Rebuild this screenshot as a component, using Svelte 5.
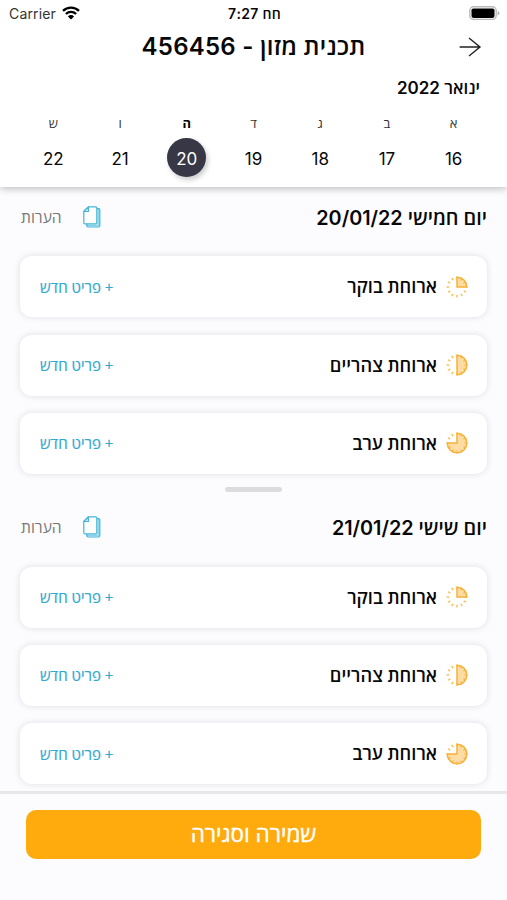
<script>
  const week = [
    { letter: 'א', date: 16 },
    { letter: 'ב', date: 17 },
    { letter: 'ג', date: 18 },
    { letter: 'ד', date: 19 },
    { letter: 'ה', date: 20, active: true },
    { letter: 'ו', date: 21 },
    { letter: 'ש', date: 22 },
  ];
  const meals = [
    { name: 'ארוחת בוקר', quarters: 1 },
    { name: 'ארוחת צהריים', quarters: 2 },
    { name: 'ארוחת ערב', quarters: 3 },
  ];
  const days = [
    { name: 'יום חמישי', date: '20/01/22' },
    { name: 'יום שישי', date: '21/01/22' },
  ];
  const wedges = {
    1: 'M11 1.2V11H20.8A9.8 9.8 0 0 0 11 1.2Z',
    2: 'M11 1.2V20.8A9.8 9.8 0 0 0 11 1.2Z',
    3: 'M11 1.2V11H1.2A9.8 9.8 0 1 0 11 1.2Z',
  };
  const ticks = Array.from({ length: 12 }, (_, i) => i * 30);
</script>

<div class="screen" dir="rtl">
  <header>
    <div class="status" dir="ltr">
      <div class="carrier">
        <span>Carrier</span>
        <svg width="18" height="14" viewBox="0 0 18 14" fill="none" stroke="#000" stroke-width="2.3">
          <path d="M1 4.9A11.3 11.3 0 0 1 17 4.9" />
          <path d="M3.9 8A7.2 7.2 0 0 1 14.1 8" />
          <path d="M9 13.6L5.9 10.4A4.4 4.4 0 0 1 12.1 10.4Z" fill="#000" stroke="none" />
        </svg>
      </div>
      <div class="time">7:27 <bdi>חח</bdi></div>
      <svg class="battery" width="31" height="15" viewBox="0 0 31 15">
        <rect x=".8" y=".8" width="26.4" height="12.6" rx="3.8" fill="#fff" stroke="#b9b9b9" stroke-width="1.4" />
        <rect x="2.5" y="2.5" width="23" height="9.4" rx="1.8" fill="#000" />
        <path d="M28.7 4.9C31 5.8 31 8.5 28.7 9.4Z" fill="#b0b0b0" />
      </svg>
    </div>
    <div class="titlebar">
      <svg class="arrow" width="23" height="20" viewBox="0 0 23 20" fill="none" stroke="#222" stroke-width="1.4">
        <path d="M.6 10H21M10 1L21 10L10 19" />
      </svg>
      <h1><span>תכנית מזון</span> - <b>456456</b></h1>
    </div>
    <div class="month"><span>ינואר</span> <b>2022</b></div>
    <div class="week">
      {#each week as d}
        <div class="day" class:active={d.active}>
          <span class="letter">{d.letter}</span>
          <span class="date">{d.date}</span>
        </div>
      {/each}
    </div>
  </header>

  <main>
    {#each days as day}
      <section>
        <div class="dayhead">
          <h2><span>{day.name}</span> <b>{day.date}</b></h2>
          <div class="notes">
            <svg width="18" height="22" viewBox="0 0 18 22" fill="none" stroke="#45b5d8" stroke-width="1.2" stroke-linejoin="round">
              <path d="M13.8 2.6H15.6Q16.8 2.6 16.8 3.8V19.8Q16.8 21 15.6 21H5Q3.8 21 3.8 19.8V17.9" fill="#d6f0f8" />
              <path d="M15.3 2.6V19.4H3.8" stroke-width=".6" />
              <path d="M5.4 .8H12.6Q13.8 .8 13.8 2V16.7Q13.8 17.9 12.6 17.9H2Q.8 17.9 .8 16.7V5.5Z" fill="#fff" />
              <path d="M5.4 .8V5.5H.8Z" fill="#d6f0f8" />
            </svg>
            <span>הערות</span>
          </div>
        </div>
        {#each meals as meal}
          <div class="card">
            <svg width="22" height="22" viewBox="0 0 22 22" fill="none">
              {#each ticks as a}
                <path d="M11 .5V3.2" stroke="#f9bd50" stroke-width="1.4" transform="rotate({a} 11 11)" />
              {/each}
              <path d={wedges[meal.quarters]} fill="#fddda4" stroke="#f8b13b" stroke-width="1.5" />
              {#each ticks.filter((a) => a > 0 && a < meal.quarters * 90) as a}
                <path d="M11 1.5V3.6" stroke="#f8b13b" stroke-width="1" transform="rotate({a} 11 11)" />
              {/each}
            </svg>
            <span class="meal">{meal.name}</span>
            <span class="add">+ פריט חדש</span>
          </div>
        {/each}
      </section>
      <div class="handle"></div>
    {/each}
  </main>

  <footer>
    <button>שמירה וסגירה</button>
  </footer>
</div>

<style>
  .screen {
    width: 507px;
    height: 900px;
    display: flex;
    flex-direction: column;
    overflow: hidden;
    background: #fcfcfe;
    color: #080808;
    font-family: Inter, "Open Sans", "Liberation Sans", sans-serif;
    white-space: nowrap;
  }
  h1, h2 { margin: 0; }
  header {
    height: 187px;
    flex: none;
    display: flex;
    flex-direction: column;
    background: #fff;
    box-shadow: 0 2px 7px rgba(0, 0, 0, 0.24);
    z-index: 1;
  }
  .status {
    height: 28px;
    padding: 0 7px 0 9px;
    display: grid;
    grid-template-columns: 1fr auto 1fr;
    align-items: center;
    font-size: 14px;
    line-height: 28px;
  }
  .carrier { display: flex; align-items: center; gap: 6px; color: #333; letter-spacing: 0.15px; }
  .carrier svg { margin-top: -3px; }
  .time { font-weight: 600; font-size: 14px; letter-spacing: 0.3px; }
  .battery { justify-self: end; margin-top: -1px; }
  .titlebar {
    height: 36px;
    display: grid;
    grid-template-columns: 1fr auto 1fr;
    align-items: center;
    padding: 0 25px;
  }
  .arrow { justify-self: start; }
  h1 { font-size: 24px; font-weight: 600; line-height: 37px; letter-spacing: 0.25px; }
  h1 b, h2 b, .month b { font-weight: 600; }
  .month {
    padding-right: 27px;
    height: 48px;
    line-height: 48px;
    font-size: 17px;
    font-weight: 600;
  }
  .week { display: flex; padding: 0 20px; }
  .day { flex: 1; display: flex; flex-direction: column; align-items: center; }
  .letter { font-size: 13px; line-height: 22px; color: #333; }
  .date {
    width: 39px;
    height: 39px;
    margin-top: 4px;
    border-radius: 50%;
    line-height: 42px;
    text-align: center;
    font-size: 17px;
  }
  .active .letter { font-weight: 700; color: #000; }
  .active .date { background: #383746; color: #fff; box-shadow: 2px 3px 5px rgba(0, 0, 0, 0.2); }
  main { height: 604px; flex: none; overflow: hidden; }
  .dayhead {
    height: 60px;
    padding: 0 20px 0 21px;
    display: flex;
    justify-content: space-between;
    align-items: center;
  }
  h2 { font-size: 19.8px; font-weight: 600; }
  .notes { display: flex; align-items: center; gap: 21px; font-size: 15.6px; color: #777; }
  section { padding-bottom: 13.5px; }
  .card {
    height: 61px;
    margin: 0 20px 17.3px;
    padding: 0 19px 0 20px;
    box-sizing: border-box;
    display: flex;
    align-items: center;
    background: #fff;
    border-radius: 12px;
    box-shadow: 0 0 7px rgba(0, 0, 0, 0.12);
  }
  .dayhead + .card { margin-top: 9.3px; }
  .card:last-child { margin-bottom: 0; }
  .meal { margin-right: 9px; font-size: 18.2px; line-height: 24px; padding-bottom: 1px; font-weight: 600; }
  .add {
    margin-right: auto;
    font: 500 15px "Open Sans", "Liberation Sans", sans-serif;
    color: #32a9cf;
    -webkit-text-stroke: 0.2px #32a9cf;
  }
  .handle { width: 57px; height: 5px; margin: 0 auto 5px; border-radius: 3px; background: #dcdcdd; }
  footer { flex: 1; border-top: 3px solid #e7e7ea; padding: 16px 26px 0; }
  button {
    width: 100%;
    height: 49px;
    padding: 0 0 2px;
    border: 0;
    border-radius: 10px;
    background: #ffaa0d;
    color: #fff;
    font: 500 22.5px "Open Sans", "Liberation Sans", sans-serif;
    -webkit-text-stroke: 0.4px #fff;
  }
</style>
